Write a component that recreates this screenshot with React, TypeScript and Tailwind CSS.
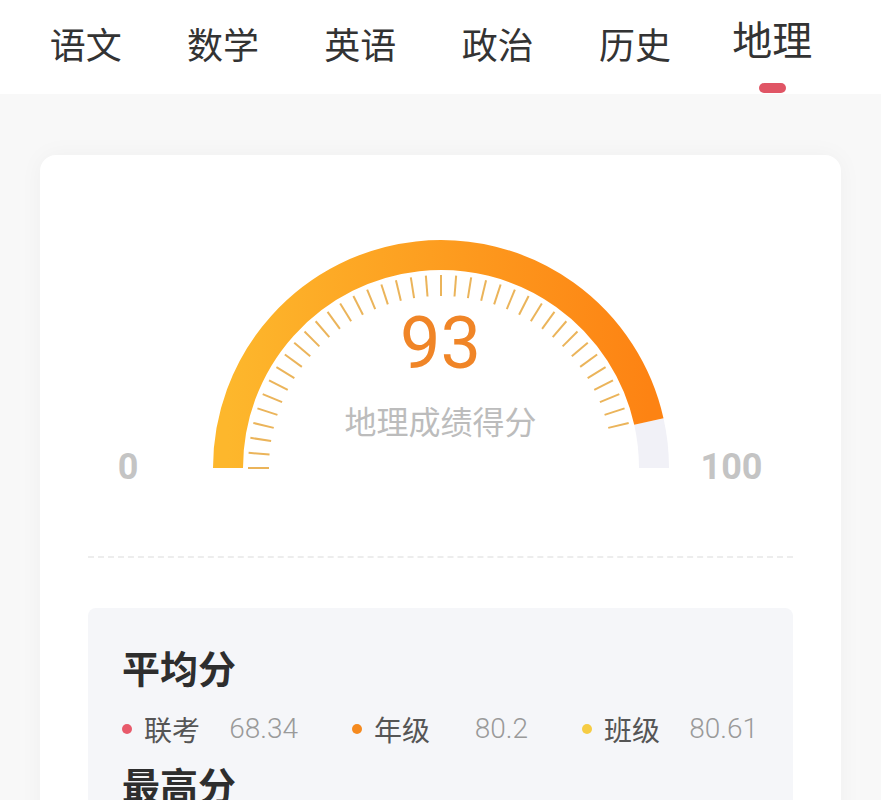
import React from "react";

const TABS = ["语文", "数学", "英语", "政治", "历史", "地理"];
const ACTIVE = 5;

const STATS = [
  { label: "联考", value: "68.34", dot: "bg-[#e85a6b]" },
  { label: "年级", value: "80.2", dot: "bg-[#f58a1f]" },
  { label: "班级", value: "80.61", dot: "bg-[#f6cc44]" },
];

function Gauge({ score }: { score: number }) {
  const cx = 240;
  const cy = 234;
  const r = 213;
  const endDeg = 180 - (score / 100) * 180;
  const rad = (d: number) => (d * Math.PI) / 180;
  const pt = (d: number, rr: number) => [cx + rr * Math.cos(rad(d)), cy - rr * Math.sin(rad(d))];
  const [sx, sy] = pt(180, r);
  const [ex, ey] = pt(endDeg, r);
  const [gx, gy] = pt(0, r);

  // 刻度只画到当前分数
  const ticks: number[] = [];
  for (let d = 180; d >= endDeg; d -= 4.5) ticks.push(d);

  return (
    <svg width="480" height="250" viewBox="0 0 480 250">
      <defs>
        <linearGradient id="arcGrad" x1="0" y1="0" x2="1" y2="0">
          <stop offset="0%" stopColor="#fdb72c" />
          <stop offset="100%" stopColor="#fd8313" />
        </linearGradient>
      </defs>
      <path d={`M ${ex} ${ey} A ${r} ${r} 0 0 1 ${gx} ${gy}`} fill="none" stroke="#f1f1f7" strokeWidth="30" />
      <path d={`M ${sx} ${sy} A ${r} ${r} 0 0 1 ${ex} ${ey}`} fill="none" stroke="url(#arcGrad)" strokeWidth="30" />
      {ticks.map((d) => {
        const [x1, y1] = pt(d, 172);
        const [x2, y2] = pt(d, 193);
        return <line key={d} x1={x1} y1={y1} x2={x2} y2={y2} stroke="#ebb45a" strokeWidth="2" />;
      })}
    </svg>
  );
}

export default function App() {
  return (
    <div className="min-h-screen bg-[#f8f8f8] font-['Roboto','Noto_Sans_CJK_SC',sans-serif] overflow-hidden">
      {/* 科目 tab */}
      <div className="h-[94px] bg-white grid grid-cols-6 pl-[17px] pr-[40px]">
        {TABS.map((t, i) => (
          <div key={t} className="flex flex-col items-center">
            <span
              className={`font-['Noto_Sans_CJK_SC',sans-serif] leading-none text-[#333] ${
                i === ACTIVE ? "text-[40px] mt-[18px]" : "text-[36px] mt-[25px]"
              }`}
            >
              {t}
            </span>
            {i === ACTIVE && <span className="mt-[25px] w-[27px] h-[10px] rounded-full bg-[#e05565]" />}
          </div>
        ))}
      </div>

      <div className="px-[40px] pt-[61px]">
        <div className="bg-white rounded-2xl shadow-[0_0_24px_rgba(0,0,0,0.04)] px-[48px] pb-10">
          <div className="grid grid-cols-[1fr_auto_1fr] items-end pt-[79px]">
            <span className="justify-self-end mr-[62px] text-[36px] font-bold text-[#c4c4c4] leading-none mb-[-1px]">0</span>
            <div className="relative">
              <Gauge score={93} />
              <div className="absolute inset-x-0 top-[74px] flex flex-col items-center">
                <span className="text-[72px] leading-none text-[#f08527]">93</span>
                <span className="mt-[24px] text-[32px] leading-none text-[#bcbcbc] font-['Noto_Sans_CJK_SC',sans-serif]">
                  地理成绩得分
                </span>
              </div>
            </div>
            <span className="justify-self-start ml-[20px] text-[36px] font-bold text-[#c4c4c4] leading-none mb-[-1px]">100</span>
          </div>

          <div className="mt-[72px] border-t-2 border-dashed border-[#ededed]" />

          <div className="mt-[50px] bg-[#f5f6f9] rounded-lg px-[34px] pt-[40px] pb-8 font-['Noto_Sans_CJK_SC',sans-serif]">
            <div className="text-[38px] font-bold leading-none text-[#2e2e2e]">平均分</div>
            <div className="mt-[22px] grid grid-cols-[176px_176px_176px] gap-x-[54px]">
              {STATS.map((s) => (
                <div key={s.label} className="flex items-center justify-between">
                  <div className="flex items-center">
                    <span className={`w-[10px] h-[10px] rounded-full ${s.dot}`} />
                    <span className="ml-[12px] text-[28px] text-[#555]">{s.label}</span>
                  </div>
                  <span className="text-[28px] text-[#9a9a9a] font-['Roboto',sans-serif] font-light">{s.value}</span>
                </div>
              ))}
            </div>
            <div className="mt-[15px] text-[38px] font-bold leading-none text-[#2e2e2e]">最高分</div>
          </div>
        </div>
      </div>
    </div>
  );
}
